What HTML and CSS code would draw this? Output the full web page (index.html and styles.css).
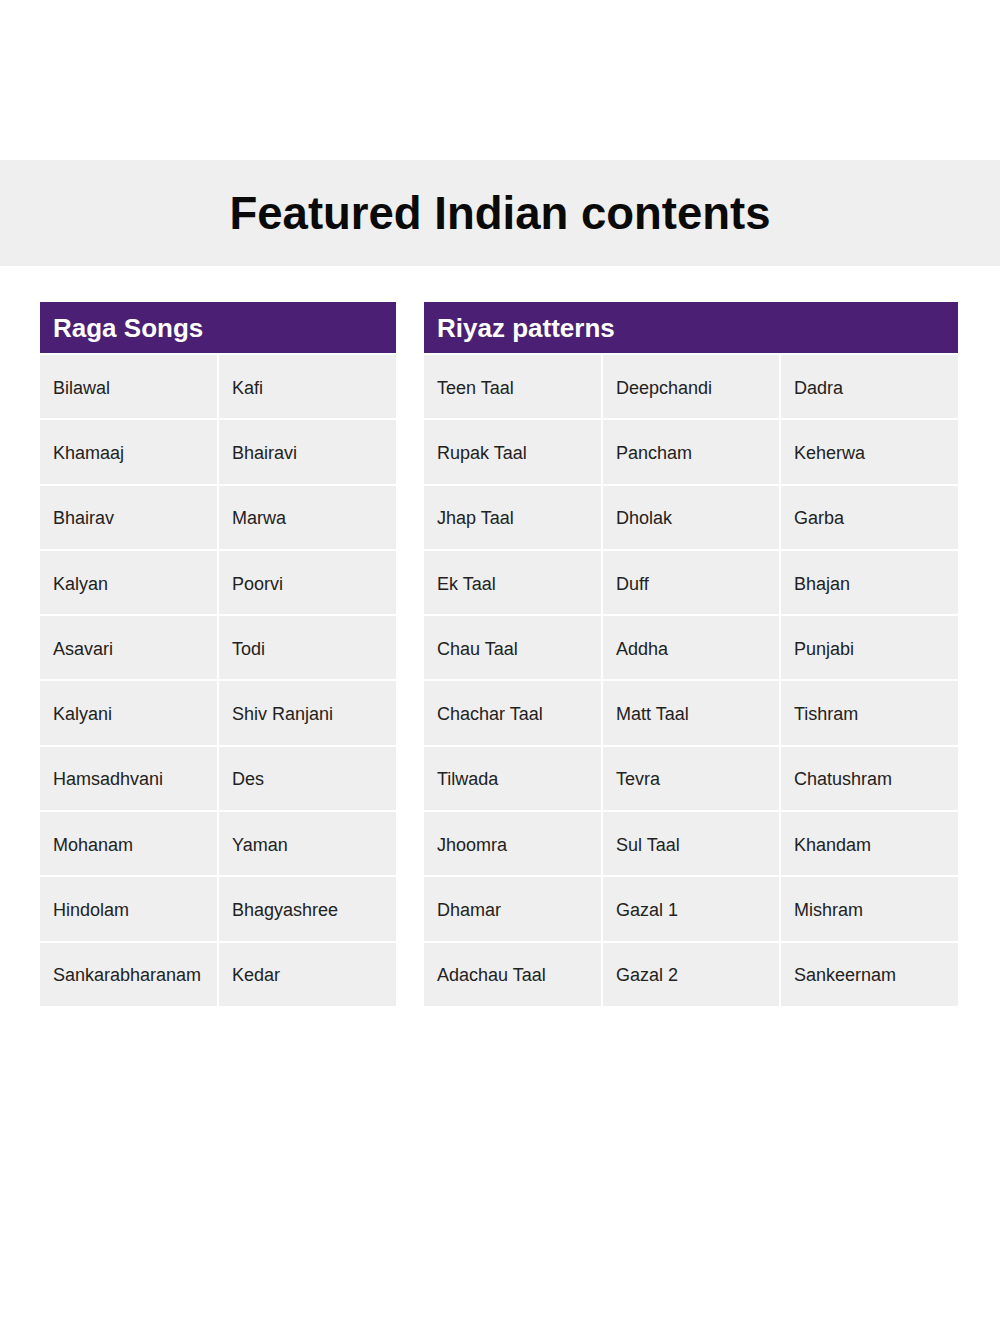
FILE: index.html
```html
<!DOCTYPE html>
<html>
<head>
<meta charset="utf-8">
<link rel="stylesheet" href="styles.css">
</head>
<body>
<div class="banner"><h1>Featured Indian contents</h1></div>
<div class="tables">
  <section class="card card-raga">
    <div class="card-head">Raga Songs</div>
    <div class="grid cols-2">
      <div class="cell">Bilawal</div><div class="cell">Kafi</div>
      <div class="cell">Khamaaj</div><div class="cell">Bhairavi</div>
      <div class="cell">Bhairav</div><div class="cell">Marwa</div>
      <div class="cell">Kalyan</div><div class="cell">Poorvi</div>
      <div class="cell">Asavari</div><div class="cell">Todi</div>
      <div class="cell">Kalyani</div><div class="cell">Shiv Ranjani</div>
      <div class="cell">Hamsadhvani</div><div class="cell">Des</div>
      <div class="cell">Mohanam</div><div class="cell">Yaman</div>
      <div class="cell">Hindolam</div><div class="cell">Bhagyashree</div>
      <div class="cell">Sankarabharanam</div><div class="cell">Kedar</div>
    </div>
  </section>
  <section class="card card-riyaz">
    <div class="card-head">Riyaz patterns</div>
    <div class="grid cols-3">
      <div class="cell">Teen Taal</div><div class="cell">Deepchandi</div><div class="cell">Dadra</div>
      <div class="cell">Rupak Taal</div><div class="cell">Pancham</div><div class="cell">Keherwa</div>
      <div class="cell">Jhap Taal</div><div class="cell">Dholak</div><div class="cell">Garba</div>
      <div class="cell">Ek Taal</div><div class="cell">Duff</div><div class="cell">Bhajan</div>
      <div class="cell">Chau Taal</div><div class="cell">Addha</div><div class="cell">Punjabi</div>
      <div class="cell">Chachar Taal</div><div class="cell">Matt Taal</div><div class="cell">Tishram</div>
      <div class="cell">Tilwada</div><div class="cell">Tevra</div><div class="cell">Chatushram</div>
      <div class="cell">Jhoomra</div><div class="cell">Sul Taal</div><div class="cell">Khandam</div>
      <div class="cell">Dhamar</div><div class="cell">Gazal 1</div><div class="cell">Mishram</div>
      <div class="cell">Adachau Taal</div><div class="cell">Gazal 2</div><div class="cell">Sankeernam</div>
    </div>
  </section>
</div>
</body>
</html>
```
FILE: styles.css
```css
html, body {
  margin: 0;
  padding: 0;
  background: #ffffff;
  font-family: "Liberation Sans", Arial, sans-serif;
  color: #222222;
}
.banner {
  margin-top: 160px;
  height: 106px;
  background: #efefef;
  display: flex;
  align-items: center;
  justify-content: center;
}
.banner h1 {
  margin: 0;
  font-size: 45.5px;
  font-weight: 700;
  color: #0a0a0a;
  line-height: 1;
  padding-top: 2px;
}
.tables {
  display: flex;
  gap: 28px;
  padding: 36px 0 0 40px;
}
.card-raga { width: 356px; }
.card-riyaz { width: 534px; }
.card-head {
  height: 51px;
  background: #4b1f74;
  color: #ffffff;
  font-weight: 700;
  font-size: 26px;
  display: flex;
  align-items: center;
  padding-left: 13px;
  padding-top: 1px;
  box-sizing: border-box;
}
.grid {
  display: grid;
  gap: 2px;
  margin-top: 2px;
  grid-auto-rows: 63.3px;
}
.cols-2 { grid-template-columns: 177px 177px; }
.cols-3 { grid-template-columns: 177px 176px 177px; }
.cell {
  background: #efefef;
  font-size: 18px;
  display: flex;
  align-items: center;
  padding-left: 13px;
  padding-top: 3px;
  box-sizing: border-box;
  color: #222222;
}
```
